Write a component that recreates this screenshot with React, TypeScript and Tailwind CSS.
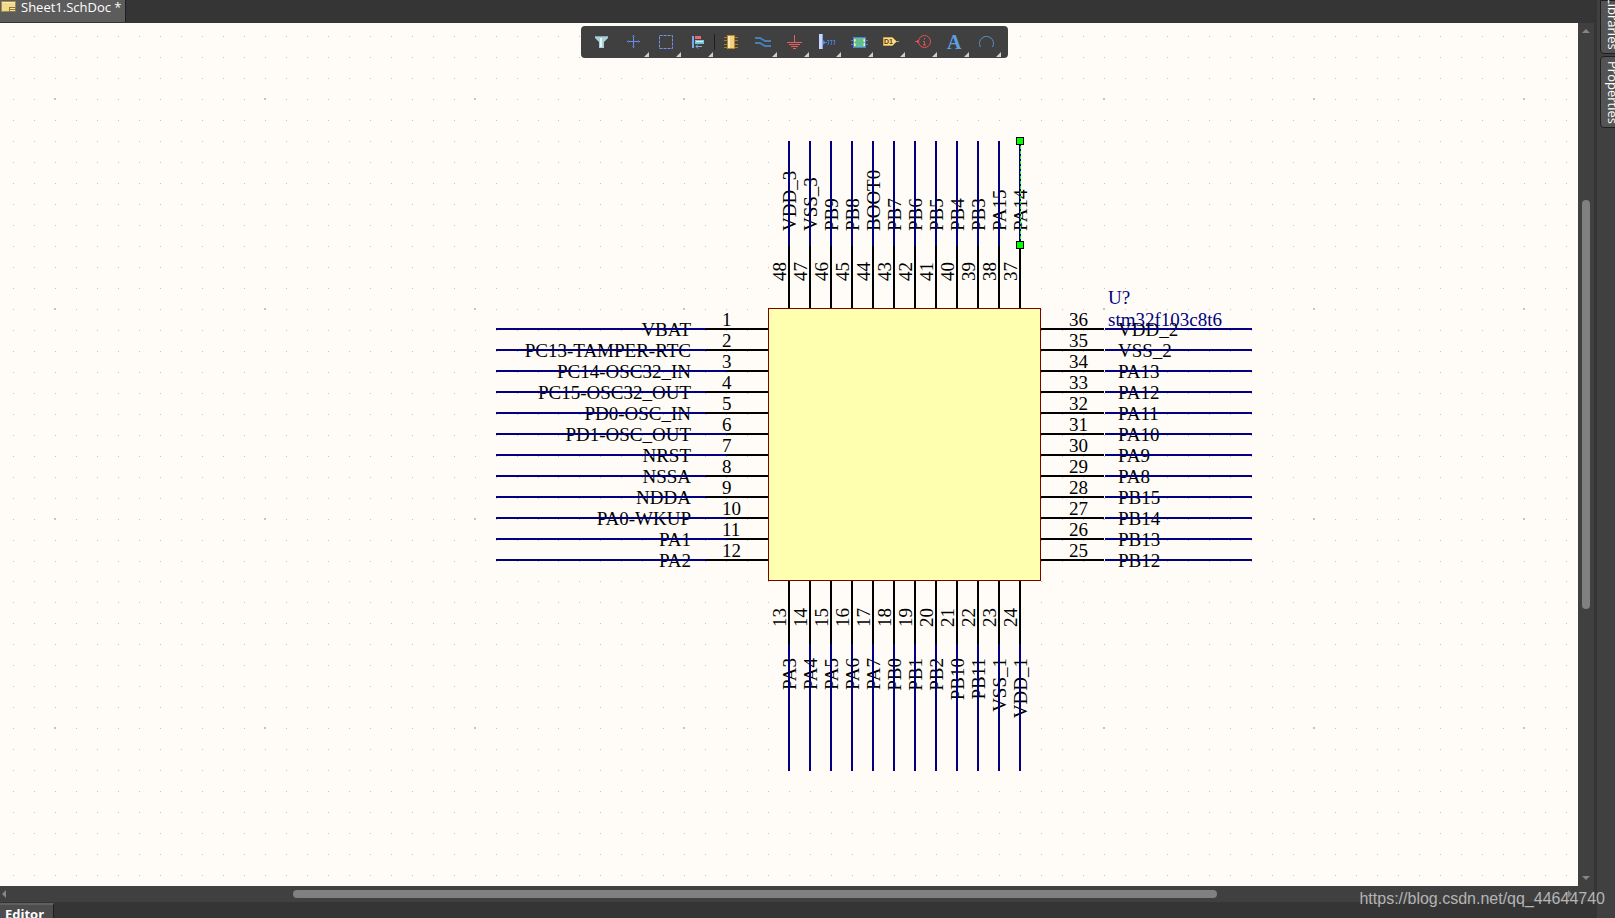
import React from 'react';

const STEP = 21;
const WIRE = '#000080';

const leftPins = [
  'VBAT', 'PC13-TAMPER-RTC', 'PC14-OSC32_IN', 'PC15-OSC32_OUT', 'PD0-OSC_IN', 'PD1-OSC_OUT',
  'NRST', 'NSSA', 'NDDA', 'PA0-WKUP', 'PA1', 'PA2'
];
const bottomPins = ['PA3', 'PA4', 'PA5', 'PA6', 'PA7', 'PB0', 'PB1', 'PB2', 'PB10', 'PB11', 'VSS_1', 'VDD_1'];
const rightPins = ['VDD_2', 'VSS_2', 'PA13', 'PA12', 'PA11', 'PA10', 'PA9', 'PA8', 'PB15', 'PB14', 'PB13', 'PB12'];
const topPins = ['VDD_3', 'VSS_3', 'PB9', 'PB8', 'BOOT0', 'PB7', 'PB6', 'PB5', 'PB4', 'PB3', 'PA15', 'PA14'];

// Left pins whose wire reaches further over the pin than the others
const longWires = [2, 5, 6, 9, 10];

const gridPath = (cols: number, rows: number) => {
  let minor = '';
  let major = '';
  for (let i = 0; i < cols; i++) {
    for (let j = 0; j < rows; j++) {
      const x = Math.round(13 + i * 20.98);
      const y = Math.round(13 + j * 20.98);
      if (i % 10 === 2 && j % 10 === 3) major += `M${x - 1} ${y - 1}h2v2h-2z`;
      else minor += `M${x} ${y}h1v1h-1z`;
    }
  }
  return { minor, major };
};

const grid = gridPath(120, 80);

const Schematic: React.FC = () => (
  <svg
    className="absolute inset-0 w-full h-full font-['Liberation_Serif',serif] text-[19px]"
    role="img"
    aria-label="stm32f103c8t6 schematic symbol"
  >
    <path d={grid.minor} fill="#c6c4c0" shapeRendering="crispEdges" />
    <path d={grid.major} fill="#c6c4c0" shapeRendering="crispEdges" />

    <rect x="768.5" y="285.5" width="272" height="272" fill="#ffffb0" stroke="#800000" />

    {leftPins.map((name, i) => {
      const y = 306 + i * STEP;
      const end = longWires.includes(i) ? 727 : 706;
      return (
        <g key={name}>
          <text x="691" y={y + 7} textAnchor="end">{name}</text>
          <text x="722" y={y - 3}>{i + 1}</text>
          <path d={`M${end} ${y}H768`} stroke="#000" strokeWidth="2" />
          <path d={`M496 ${y}H${end}`} stroke={WIRE} strokeWidth="2" />
        </g>
      );
    })}

    {rightPins.map((name, i) => {
      const y = 306 + i * STEP;
      return (
        <g key={name}>
          <text x="1118" y={y + 7}>{name}</text>
          <text x="1088" y={y - 3} textAnchor="end">{36 - i}</text>
          <path d={`M1041 ${y}H1104`} stroke="#000" strokeWidth="2" />
          <path d={`M1105 ${y}H1252`} stroke={WIRE} strokeWidth="2" />
        </g>
      );
    })}

    {topPins.map((name, i) => {
      const x = 789 + i * STEP;
      return (
        <g key={name}>
          <text transform={`translate(${x + 7} 208) rotate(-90)`}>{name}</text>
          <text transform={`translate(${x - 3} 258) rotate(-90)`}>{48 - i}</text>
          <path d={`M${x} 223V285`} stroke="#000" strokeWidth="2" />
          <path d={`M${x} 118V223`} stroke={WIRE} strokeWidth="2" />
        </g>
      );
    })}

    {bottomPins.map((name, i) => {
      const x = 789 + i * STEP;
      return (
        <g key={name}>
          <text transform={`translate(${x + 7} 635) rotate(-90)`} textAnchor="end">{name}</text>
          <text transform={`translate(${x - 3} 604) rotate(-90)`}>{13 + i}</text>
          <path d={`M${x} 558V621`} stroke="#000" strokeWidth="2" />
          <path d={`M${x} 621V748`} stroke={WIRE} strokeWidth="2" />
        </g>
      );
    })}

    <text x="1108" y="281" fill={WIRE}>U?</text>
    <text x="1108" y="303" fill={WIRE}>stm32f103c8t6</text>

    {/* selected wire */}
    <path d="M1020.5 118V222" stroke="#00ff00" strokeDasharray="3 2" />
    <rect x="1016.5" y="114.5" width="7" height="7" fill="#00ff00" stroke="#000" />
    <rect x="1016.5" y="218.5" width="7" height="7" fill="#00ff00" stroke="#000" />
  </svg>
);

const tools = [
  {
    label: 'Filter',
    menu: false,
    icon: (
      <>
        <path d="M9 10h13v2l-4 4v6h-5v-6l-4-4z" fill="#a9cfd8" />
        <path d="M9 10h13v1H9z" fill="#7fa9b3" />
        <path d="M14 12h2v9h-2z" fill="#e3f3f6" />
      </>
    )
  },
  {
    label: 'Move',
    menu: true,
    icon: (
      <>
        <path d="M9 15.5h13M15.5 9v13" stroke="#6b8fe0" fill="none" />
        <path d="M14 10.5h3M14 20.5h3M10.5 14v3M20.5 14v3" stroke="#4c68ad" fill="none" />
      </>
    )
  },
  {
    label: 'Select area',
    menu: true,
    icon: <rect x="9.5" y="9.5" width="13" height="13" stroke="#6f95ea" strokeDasharray="3 1" fill="none" />
  },
  {
    label: 'Align',
    menu: true,
    icon: (
      <>
        <path d="M10 10h2v12h-2z" fill="#7da7ee" />
        <path d="M13 10h6v3h-6z" fill="#e8696c" />
        <path d="M13 14h9v4h-9z" fill="#7cc3da" />
        <path d="M14 15h7v1h-7z" fill="#d5f0f7" />
        <path d="M14 20.5h6M16 18.5l-2 2 2 2" stroke="#7cb2cf" fill="none" />
      </>
    )
  },
  {
    label: 'Place part',
    menu: false,
    icon: (
      <>
        <path d="M10 11.5h14M10 14.5h14M10 18.5h14M10 21.5h14" stroke="#9a7c32" />
        <rect x="13.5" y="9.5" width="7" height="13" fill="#f6cf7c" stroke="#b58a2c" />
        <path d="M14 10h2v12h-2z" fill="#fdebb8" />
      </>
    )
  },
  {
    label: 'Place wire',
    menu: true,
    icon: (
      <path d="M9 12h5l5 3h6M9 17h5l5 3h6" stroke="#4780b8" strokeWidth="2" fill="none" />
    )
  },
  {
    label: 'Power port',
    menu: true,
    icon: <path d="M16.5 9v7M9 16.5h15M11 18.5h11M13 20.5h7M15 22.5h3" stroke="#e8605a" fill="none" />
  },
  {
    label: 'Signal harness',
    menu: true,
    icon: (
      <>
        <path d="M9 8h4v15H9z" fill="#c6d9fd" />
        <path d="M12 8h1v15h-1z" fill="#7fa3ee" />
        <path d="M13 14l3 2.5-3 2.5" fill="#5b83dd" />
        <path
          d="M15 16.5h2M17 14.5h2l-1 4.5M20 14.5h2l-1 4.5M23 14.5h2l-1 4.5"
          stroke="#4c78d6"
          fill="none"
        />
      </>
    )
  },
  {
    label: 'Sheet symbol',
    menu: true,
    icon: (
      <>
        <path d="M9 14.5h2M9 18.5h2M24 14.5h2M24 18.5h2" stroke="#4b7fe0" />
        <rect x="11.5" y="11.5" width="12" height="10" fill="#63bf92" stroke="#4b7fe0" />
        <path d="M12 13h1l1 1-1 2h-1zM12 17h1l1 2-1 1h-1zM23 13h-1l-1 1 1 2h1zM23 17h-1l-1 2 1 1h1z" fill="#ffe98f" />
      </>
    )
  },
  {
    label: 'Port',
    menu: true,
    icon: (
      <>
        <path d="M22 15.5h3" stroke="#d3a73d" />
        <path d="M9.5 11.5h9l4 4-4 4h-9z" fill="#f8dc8f" stroke="#d3a73d" />
        <text x="10" y="18" fontSize="7" fontWeight="bold" fontFamily="Liberation Sans, sans-serif" fill="#5c4208">D1</text>
      </>
    )
  },
  {
    label: 'Parameter set',
    menu: true,
    icon: (
      <>
        <circle cx="18.5" cy="15.5" r="6" stroke="#e8504e" fill="none" />
        <path d="M9 15.5h4M11.5 14v3M18.5 12v1.5M17 15.5h1.5v3.5M17 19h3" stroke="#e8504e" fill="none" />
      </>
    )
  },
  {
    label: 'Text string',
    menu: true,
    icon: (
      <text x="9" y="23" fontSize="20" fontWeight="bold" fontFamily="Liberation Serif, serif" fill="#5f9fe0">A</text>
    )
  },
  {
    label: 'Arc',
    menu: true,
    icon: <path d="M10.5 21A7 7 0 1 1 22.5 21" stroke="#5590cc" fill="none" />
  }
];

const Toolbar: React.FC = () => (
  <div className="absolute left-[581px] top-[3px] flex h-8 rounded-sm bg-[#404040] pl-[5px] pr-1.5" role="toolbar">
    {tools.map((tool) => (
      <button key={tool.label} type="button" aria-label={tool.label} className="relative w-8 h-8">
        {tool.label === 'Place part' && <span className="absolute left-0 top-2 h-4 w-px bg-[#1e1e1e]" />}
        <svg viewBox="0 0 32 32" className="w-8 h-8">
          {tool.icon}
          {tool.menu && <path d="M31 26v5h-5z" fill="#d0d0d0" />}
        </svg>
      </button>
    ))}
  </div>
);

const Arrow: React.FC<{ d: string; label: string; className: string }> = ({ d, label, className }) => (
  <button type="button" aria-label={label} className={`flex items-center justify-center shrink-0 ${className}`}>
    <svg viewBox="0 0 8 8" className="w-2 h-2 shrink-0">
      <path d={d} fill="#868686" />
    </svg>
  </button>
);

const App: React.FC = () => {
  return (
    <div className="relative flex h-screen overflow-hidden bg-[#353535] font-['Open_Sans','Noto_Sans',sans-serif] text-white">
      <div className="flex flex-col flex-1 min-w-0">
        <header className="flex h-[23px] shrink-0 overflow-hidden">
          <button
            type="button"
            className="flex h-[22px] items-start gap-[5px] bg-[#5c5c5c] border-r border-[#1f1f1f] pr-[3px] text-[13px] leading-[14px] whitespace-nowrap"
          >
            <svg viewBox="0 0 16 12" className="w-4 h-3">
              <rect x="1" y="1" width="15" height="11" fill="#a08b52" />
              <rect x="2" y="2" width="13" height="9" fill="#f3da8b" />
              <path d="M2 2h13v1H2z" fill="#fbecb6" />
              <path d="M9 7h7v5H9z" fill="#8a7641" />
              <path d="M10 8h5v1h-5zM10 10h5v1h-5z" fill="#f7e6ac" />
            </svg>
            Sheet1.SchDoc *
          </button>
        </header>

        <div className="flex flex-1 min-h-0">
          <main className="relative flex-1 min-w-0 overflow-hidden bg-[#fffcf7]">
            <Schematic />
            <Toolbar />
          </main>
          <div className="flex w-4 shrink-0 flex-col items-center bg-[#404040]">
            <Arrow label="Scroll up" d="M4 2l4 4H0z" className="w-4 h-4" />
            <div className="grow-[161]" />
            <div className="w-2 grow-[409] rounded-full bg-[#808080]" />
            <div className="grow-[261]" />
            <Arrow label="Scroll down" d="M0 2h8L4 6z" className="w-4 h-4" />
          </div>
        </div>

        <div className="flex h-4 shrink-0 items-center bg-[#404040] pr-4">
          <Arrow label="Scroll left" d="M2 4l4-4v8z" className="w-2 h-4" />
          <div className="grow-[285]" />
          <div className="h-2 grow-[924] rounded-full bg-[#808080]" />
          <div className="grow-[345]" />
          <Arrow label="Scroll right" d="M6 4L2 0v8z" className="w-4 h-4" />
        </div>

        <footer className="flex h-4 shrink-0 overflow-hidden">
          <button
            type="button"
            className="mt-px h-6 border-t-2 border-r border-t-[#606060] border-r-[#1f1f1f] bg-[#4d4d4d] pb-1 pl-[5px] pr-[9px] text-[13px] leading-4 font-bold"
          >
            Editor
          </button>
        </footer>
      </div>

      <aside className="ml-[3px] w-[18px] shrink-0 overflow-hidden bg-[#404040] pl-[3px] text-[13px] leading-4">
        <button
          type="button"
          className="flex h-[54px] w-[26px] items-center justify-end rounded-bl-sm border border-[#1f1f1f] bg-[#545454] pb-[3px] [writing-mode:vertical-rl]"
        >
          Libraries
        </button>
        <button
          type="button"
          className="mt-0.5 flex h-[72px] w-[26px] items-center justify-center rounded-l-sm border border-[#1f1f1f] bg-[#545454] [writing-mode:vertical-rl]"
        >
          Properties
        </button>
      </aside>

      <a
        href="https://blog.csdn.net/qq_44644740"
        className="absolute right-2.5 bottom-[7px] font-['Liberation_Sans',sans-serif] text-base leading-6 text-[#b4b4b4]"
      >
        https://blog.csdn.net/qq_44644740
      </a>
    </div>
  );
};

export default App;
